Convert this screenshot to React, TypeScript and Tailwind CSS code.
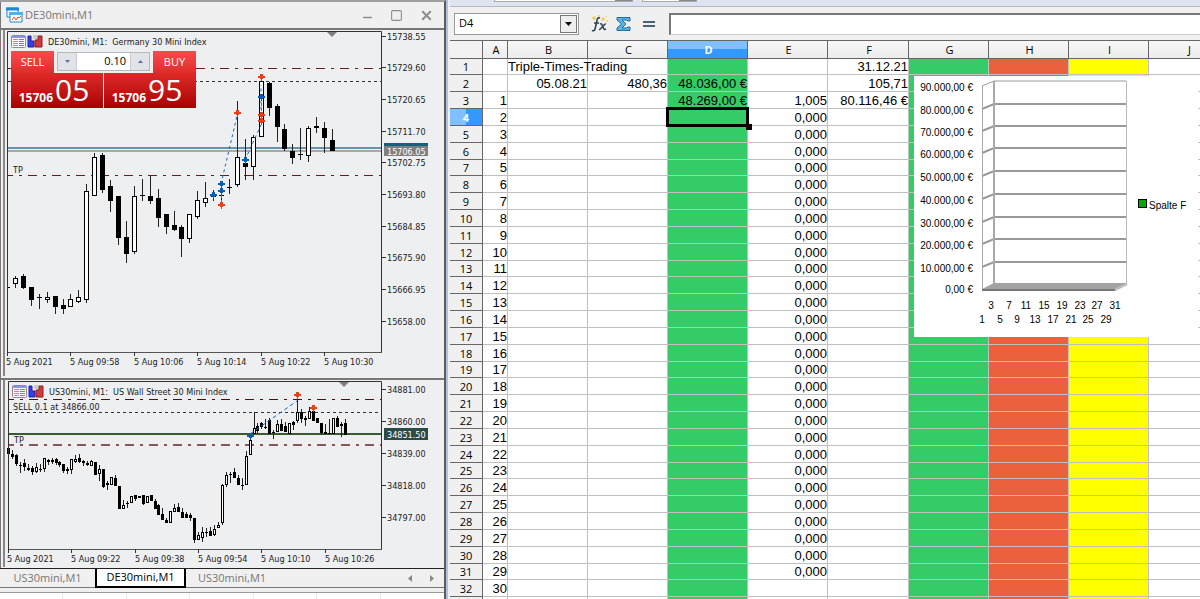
import type { ReactNode } from 'react';
import { Minus, Square, X } from 'lucide-react';

// [high, bodyTop, bodyBottom, low, 1 = bearish / 0 = bullish]
type Candle = [number, number, number, number, number];

const DE30: Candle[] = [
  [276,278,284,288,0],[274,276,288,289,1],[287,287,300,306,1],[294,297,297,309,1],[292,297,300,303,0],
  [296,296,307,314,1],[299,305,309,314,1],[294,299,307,307,0],[290,297,302,303,0],[184,191,300,303,0],
  [153,157,196,196,0],[153,155,190,193,1],[180,186,201,212,1],[196,196,238,245,1],[221,237,254,263,1],
  [186,196,252,254,0],[179,195,195,201,1],[176,196,201,204,1],[189,198,218,227,1],[214,214,227,234,1],
  [211,225,230,231,1],[225,227,239,257,1],[214,214,239,243,0],[191,200,217,219,0],[182,198,203,207,0],
  [190,196,196,201,1],[185,195,195,206,1],[179,187,187,194,1],[101,157,185,187,0],[139,163,167,180,1],
  [135,137,167,180,0],[81,81,137,137,0],[82,83,108,116,1],[104,106,127,142,1],[124,129,149,151,1],
  [144,151,158,164,1],[128,154,154,160,1],[126,128,156,162,0],[117,126,128,133,0],[122,128,138,153,1],
  [129,140,151,151,1],
];

const US30: Candle[] = [
  [447,448,454,454,1],[450,454,457,459,1],[454,455,464,466,1],[462,465,465,473,1],[459,463,467,471,1],
  [464,468,470,471,1],[466,468,472,475,1],[463,467,472,473,0],[464,469,469,472,1],[458,458,469,472,0],
  [459,460,462,465,1],[458,460,462,464,1],[458,459,463,465,1],[461,462,465,467,1],[464,464,471,473,1],
  [467,469,471,474,1],[459,459,470,474,0],[455,459,462,463,0],[454,458,462,463,1],[460,461,463,466,1],
  [461,463,465,466,1],[460,461,466,466,0],[462,462,475,475,1],[465,469,474,481,0],[469,469,487,488,1],
  [481,483,485,490,0],[477,477,485,485,0],[475,478,486,486,1],[486,486,509,509,1],[500,505,509,509,0],
  [501,503,504,508,1],[496,496,503,503,0],[495,495,499,501,1],[496,496,498,498,0],[495,495,504,505,1],
  [496,496,503,503,0],[495,495,501,501,1],[499,501,509,509,1],[504,505,515,515,1],[508,514,520,520,1],
  [518,520,523,523,1],[511,511,523,523,0],[504,508,512,512,0],[503,507,512,512,1],[508,512,518,518,1],
  [512,514,518,518,1],[513,515,518,521,1],[518,518,540,543,1],[532,535,540,540,0],[527,532,538,542,0],
  [528,532,532,537,1],[527,531,536,536,1],[525,529,535,536,0],[522,525,528,528,0],[484,485,523,525,0],
  [472,475,485,487,0],[472,474,474,483,1],[468,472,478,478,1],[475,478,485,485,1],[478,485,485,490,1],
  [451,456,485,485,0],[440,440,455,455,0],[412,428,434,434,0],[423,426,431,433,1],[422,423,427,429,1],
  [419,427,427,429,1],[418,420,434,434,1],[430,432,432,439,1],[420,424,432,432,0],[419,424,431,431,1],
  [422,426,432,432,1],[423,423,434,434,0],[421,422,425,430,1],[399,412,421,423,0],[409,412,419,423,1],
  [416,418,420,426,1],[407,411,419,419,0],[408,411,421,421,1],[418,418,423,423,1],[423,423,433,435,1],
  [424,432,434,434,0],[419,433,433,434,1],[418,418,434,434,0],[416,418,427,427,1],[422,424,426,437,0],
  [419,423,435,435,1],
];

const CHART_FONT = "font-['DejaVu_Sans_Condensed','Noto_Sans',sans-serif]";
const UI_FONT = "font-['Open_Sans','Noto_Sans',sans-serif]";

function Candles({ data, start, step, width }: { data: Candle[]; start: number; step: number; width: number }) {
  return (
    <g shapeRendering="crispEdges">
      {data.map(([high, top, bottom, low, bear], i) => {
        const x = Math.round(start + i * step);
        const left = x - Math.floor(width / 2);
        const height = Math.max(bottom - top, 1);
        return (
          <g key={i}>
            <rect x={x} y={high} width={1} height={Math.max(low - high, 1)} fill="#222" />
            <rect x={left} y={top} width={width} height={height} fill="#000" />
            {!bear && (
              <rect x={left + 1} y={top + 1} width={width - 2} height={Math.max(height - 2, 0)} fill="#fff" />
            )}
          </g>
        );
      })}
    </g>
  );
}

function Marker({ x, y, color }: { x: number; y: number; color: string }) {
  return <path d={`M${x - 3} ${y - 1}h2v-2h3v2h2v2h-2v1h-1v2h-1v-2h-1v-1h-2z`} fill={color} />;
}

const RED = '#e8401c';
const BLUE = '#0b5cb0';

type ChartProps = {
  label: string;
  title: string;
  top: number;
  height: number;
  plot: { left: number; top: number; bottom: number };
  prices: [string, number][];
  times: [string, number][];
  shift: number;
  children: ReactNode;
};

function Chart({ label, title, top, height, plot, prices, times, shift, children }: ChartProps) {
  const { left, bottom } = plot;
  return (
    <svg
      role="img"
      aria-label={label}
      width={434}
      height={height}
      viewBox={`5 ${top} 434 ${height}`}
      className={`block ${CHART_FONT} text-[9px]`}
      fill="#222"
    >
      {children}
      <path d={`M${left + 0.5} ${bottom}V${plot.top + 0.5}H381.5V${bottom}`} fill="none" stroke="#333" />
      <path d={`M${left} ${bottom}.5H382`} stroke="#555" />
      <path d={`M${shift - 5} ${plot.top + 1}h10l-5 5z`} fill="#808080" />
      {prices.map(([text, y]) => (
        <g key={text}>
          <path d={`M382 ${y}.5h4`} stroke="#333" />
          <text x={387} y={y + 4}>{text}</text>
        </g>
      ))}
      {times.map(([text, x], i) => (
        <g key={text}>
          <path d={`M${x}.5 ${bottom}v4`} stroke="#333" />
          <text x={i ? x : x - 1} y={bottom + 13}>{text}</text>
        </g>
      ))}
      <g transform={`translate(${left + 4} ${plot.top + 4})`}>
        <rect x=".5" y=".5" width="14" height="12" rx="1" fill="#fff" stroke="#8a8aa5" />
        <path d="M1 2h13" stroke="#8d95e0" strokeWidth="2" />
        <path d="M2 4.500h5M2 6.500h5M2 8.500h5M2 10.500h5" stroke="#e87878" />
        <path d="M8 4.500h5M8 6.500h5M8 8.500h5M8 10.500h5" stroke="#6f7be0" />
        <path d="M17 1h3v5h3v6h-6z" fill="#3b3fe0" stroke="#20209a" />
        <path d="M31 1h-4v4h-3v7h7z" fill="#cf3a3a" stroke="#8a2020" />
        <path d="M22 1h5M22 3h4" stroke="#aaa" />
      </g>
      <text x={left + 41} y={plot.top + 14} xmlSpace="preserve">{title}</text>
    </svg>
  );
}

const dashDot = { strokeDasharray: '9 6 3 6', strokeDashoffset: 4 };

function DE30Chart() {
  return (
    <Chart
      label="DE30mini M1 candlestick chart"
      title="DE30mini, M1:  Germany 30 Mini Index"
      top={30}
      height={343}
      plot={{ left: 7, top: 31, bottom: 352 }}
      shift={332}
      prices={[
        ['15738.55', 36], ['15729.60', 67], ['15720.65', 99], ['15711.70', 131], ['15702.75', 162],
        ['15693.80', 194], ['15684.85', 226], ['15675.90', 257], ['15666.95', 289], ['15658.00', 321],
      ]}
      times={[
        ['5 Aug 2021', 7], ['5 Aug 09:58', 70], ['5 Aug 10:06', 134],
        ['5 Aug 10:14', 197], ['5 Aug 10:22', 261], ['5 Aug 10:30', 324],
      ]}
    >
      <path d="M8 68.500H381M8 175.500H381" stroke="#641c1c" {...dashDot} />
      <path d="M8 81.500H381" stroke="#333" strokeDasharray="3 3" />
      <path d="M8 148H381" stroke="#6595aa" strokeWidth="2" />
      <path d="M8 151H381" stroke="#a5a9a9" strokeWidth="2" />
      <text x="13" y="173">TP</text>
      <path d="M8 287.500h2" stroke="#000" />
      <Candles data={DE30} start={15} step={7.925} width={5} />
      <path d="M221 184L237 116M245 160L261 125V85" fill="none" stroke="#1769c0" strokeDasharray="3 3" />
      <path d="M261.500 98V122M221.500 190V203" stroke={RED} strokeDasharray="3 2" />
      {[[237, 113], [261, 77], [261, 115], [261, 121], [221, 205]].map(([x, y]) => (
        <Marker key={`${x}-${y}`} x={x} y={y} color={RED} />
      ))}
      {[[261, 97], [245, 160], [221, 184], [221, 191], [213, 195]].map(([x, y]) => (
        <Marker key={`${x}-${y}`} x={x} y={y} color={BLUE} />
      ))}
      <rect x="384" y="143" width="44" height="3" fill="#17607c" />
      <rect x="384" y="146" width="44" height="10" fill="#808080" />
      <text x="387" y="155" fill="#fff">15706.05</text>
    </Chart>
  );
}

function US30Chart() {
  return (
    <Chart
      label="US30mini M1 candlestick chart"
      title="US30mini, M1:  US Wall Street 30 Mini Index"
      top={380}
      height={186}
      plot={{ left: 8, top: 381, bottom: 549 }}
      shift={344}
      prices={[['34881.00', 389], ['34860.00', 421], ['34839.00', 453], ['34818.00', 485], ['34797.00', 517]]}
      times={[
        ['5 Aug 2021', 8], ['5 Aug 09:22', 71], ['5 Aug 09:38', 135],
        ['5 Aug 09:54', 198], ['5 Aug 10:10', 261], ['5 Aug 10:26', 325],
      ]}
    >
      <path d="M9 399.500H381" stroke="#4a1010" {...dashDot} />
      <path d="M9 412.500H381" stroke="#333" strokeDasharray="3 3" />
      <path d="M9 434H381" stroke="#3c5a30" strokeWidth="2" />
      <path d="M9 445H381" stroke="#8c5656" strokeWidth="2" {...dashDot} />
      <text x="13" y="410">SELL 0.1 at 34866.00</text>
      <text x="14" y="443">TP</text>
      <Candles data={US30} start={8} step={3.96} width={3} />
      <path d="M250 434L297 401" stroke="#1769c0" strokeDasharray="4 3" />
      <Marker x={250} y={436} color={BLUE} />
      <Marker x={297} y={395} color={RED} />
      <Marker x={313} y={408} color={RED} />
      <rect x="384" y="428" width="44" height="12" fill="#2b4a48" />
      <text x="387" y="438" fill="#fff">34851.50</text>
    </Chart>
  );
}

function TradeButton({ side, price, pips }: { side: 'SELL' | 'BUY'; price: string; pips: string }) {
  return (
    <button className="flex h-[57px] w-[92px] flex-col text-white">
      <span
        className={`flex h-[22px] w-[43px] items-center justify-center bg-linear-to-b from-[#f94b4b] to-[#df2c2c] text-[11px] ${
          side === 'BUY' ? 'self-end' : ''
        }`}
      >
        {side}
      </span>
      <span className="flex w-full flex-1 items-end justify-center gap-0.5 bg-linear-to-b from-[#df2828] to-[#a80000] pr-1.5 leading-none">
        <span className="pb-1 text-xs leading-3 font-bold">{price}</span>
        <span className="pb-0.5 text-[30px] leading-8">{pips}</span>
      </span>
    </button>
  );
}

function OneClickPanel() {
  return (
    <div className={`absolute top-[21px] left-[6px] flex gap-px ${UI_FONT}`}>
      <TradeButton side="SELL" price="15706" pips="05" />
      <TradeButton side="BUY" price="15706" pips="95" />
      <div className="absolute top-0 left-[43px] flex h-[22px] w-[99px] bg-[#eeeff1] px-[3px] pt-px pb-0.5">
        <div className="flex w-full border border-[#b4b8c0] bg-white">
          <button aria-label="Decrease volume" className="flex w-[18px] shrink-0 items-center justify-center bg-[#e2e3e6]">
            <svg width="5" height="3"><path d="M0 0h5L2.500 3z" fill="#5c6fa8" /></svg>
          </button>
          <input aria-label="Volume" defaultValue="0.10" className="w-0 flex-1 border-x border-[#c8ccd2] pr-1 text-right text-[11px] text-black" />
          <button aria-label="Increase volume" className="flex w-[18px] shrink-0 items-center justify-center bg-[#e2e3e6]">
            <svg width="5" height="3"><path d="M0 3h5L2.500 0z" fill="#5c6fa8" /></svg>
          </button>
        </div>
      </div>
    </div>
  );
}

function TerminalPanel() {
  return (
    <section className={`flex w-[446px] shrink-0 flex-col overflow-hidden border-t-2 border-r-2 border-t-[#a0a0a0] border-r-[#605a5a] bg-[#f0f0f0] ${UI_FONT}`}>
      <header className="flex h-[26px] shrink-0 items-center border-l border-[#777] pr-2.5 pl-[5px] text-[11px] text-[#777]">
        <svg width="17" height="17" viewBox="0 0 17 17" className="mr-0.5">
          <path d="M1 1h11v9H1z" fill="#fff" stroke="#1c86d8" />
          <path d="M0 2h13" stroke="#1c86d8" strokeWidth="3" />
          <path d="M4 6h12v9H4z" fill="#fff" stroke="#1c86d8" />
          <path d="M3 6.500h14" stroke="#49b4f4" strokeWidth="3" />
          <path d="M6 13l2-3 2 3 2-3 1 1 2-2" fill="none" stroke="#e8502c" />
        </svg>
        <span className="flex-1">DE30mini,M1</span>
        <div className="flex gap-4 text-[#8c8c8c]">
          <button aria-label="Minimize" className="pt-1"><Minus size={13} strokeWidth={3} /></button>
          <button aria-label="Maximize"><Square size={13} /></button>
          <button aria-label="Close"><X size={15} strokeWidth={3} /></button>
        </div>
      </header>

      <div className="h-[350px] shrink-0 border-t-2 border-l border-[#777] pr-1 pl-0.5">
        <div className="relative h-[346px] border-l-2 border-[#8a8686] bg-[#eeeff1]">
          <OneClickPanel />
          <DE30Chart />
        </div>
      </div>

      <div className="h-[190px] shrink-0 border-t-2 border-l border-[#777] pr-1 pl-0.5">
        <div className="h-[187px] border-l-2 border-[#8a8686] bg-[#eeeff1]">
          <US30Chart />
        </div>
      </div>

      <nav className="flex h-[25px] shrink-0 items-start border-t border-b border-t-[#222] border-b-[#999] text-[11px] text-[#777]">
        <button className="h-[19px] w-[95px] border-b border-[#777]">US30mini,M1</button>
        <button className="h-[19px] w-[91px] border-x-2 border-b-2 border-black bg-white text-black">DE30mini,M1</button>
        <button className="h-[19px] w-[92px] border-b border-[#777]">US30mini,M1</button>
        <div className="flex h-[19px] flex-1 items-center justify-end gap-[18px] border-b border-[#777] pr-2.5">
          <button aria-label="Scroll left"><svg width="4" height="7"><path d="M4 0v7L0 3.500z" fill="#888" /></svg></button>
          <button aria-label="Scroll right"><svg width="4" height="7"><path d="M0 0v7l4-3.500z" fill="#888" /></svg></button>
        </div>
      </nav>
      <div className="grid flex-1 grid-cols-7 divide-x divide-[#e8e8e8] bg-white">
        {Array.from({ length: 7 }, (_, i) => <div key={i} />)}
      </div>
    </section>
  );
}

const COLUMNS = ['A', 'B', 'C', 'D', 'E', 'F', 'G', 'H', 'I', 'J'] as const;

const ROW_COUNT = 32;

const FILL: Record<string, string> = {
  D: 'bg-[#33cc66]',
  G: 'bg-[#33cc66]',
  H: 'bg-[#eb613d]',
  I: 'bg-[#ffff00]',
};

const CELLS: Record<string, string> = {
  B1: 'Triple-Times-Trading',
  F1: '31.12.21',
  B2: '05.08.21',
  C2: '480,36',
  D2: '48.036,00 €',
  F2: '105,71',
  D3: '48.269,00 €',
  E3: '1,005',
  F3: '80.116,46 €',
};

function cellText(col: string, row: number) {
  if (col === 'A' && row > 2) return String(row - 2);
  if (col === 'E' && row > 3 && row < 32) return '0,000';
  return CELLS[col + row] ?? '';
}

function Sheet() {
  return (
    <table className="w-[739px] table-fixed border-separate border-spacing-0 font-['Liberation_Sans',Arial,sans-serif] text-[13px] text-black">
      <colgroup>
        <col className="w-[33px]" />
        <col className="w-[25px]" />
        {COLUMNS.slice(1).map((c) => <col key={c} className={c === 'F' ? 'w-[81px]' : 'w-20'} />)}
      </colgroup>
      <thead>
        <tr className={`h-[18px] text-[11px] leading-4 ${UI_FONT}`}>
          <th aria-label="Select all" className="border-r border-b border-[#666] bg-[#f2f2f2] p-0" />
          {COLUMNS.map((c) => (
            <th
              key={c}
              scope="col"
              className={`border-r border-b border-[#666] p-0 pl-0.5 ${
                c === 'D'
                  ? 'bg-linear-to-b from-[#80c0ff] from-50% to-[#3399ff] to-50% font-bold text-white'
                  : 'bg-linear-to-b from-[#f8f8f8] to-[#ececec] font-normal'
              }`}
            >
              {c}
            </th>
          ))}
        </tr>
      </thead>
      <tbody>
        {Array.from({ length: ROW_COUNT }, (_, i) => i + 1).map((row) => (
          <tr key={row} className={row % 6 === 1 ? 'h-4' : 'h-[17px]'}>
            <th
              scope="row"
              className={`border-r border-b border-[#666] p-0 pt-px text-[11px] leading-[14px] ${UI_FONT} ${
                row === 4
                  ? 'bg-linear-to-r from-[#80c0ff] from-50% to-[#3399ff] to-50% font-bold text-white'
                  : 'bg-[#f0f0f0] font-normal'
              }`}
            >
              {row}
            </th>
            {COLUMNS.map((c) => (
              <td
                key={c}
                className={`border-r border-b border-[#c0c0c0] p-0 pt-px leading-[14px] whitespace-nowrap ${FILL[c] ?? 'bg-white'} ${
                  c + row === 'B1' ? 'text-left' : 'text-right'
                } ${c + row === 'D4' ? 'relative' : ''}`}
              >
                {cellText(c, row)}
                {c + row === 'D4' && (
                  <span className="absolute -inset-0.5 border-[3px] border-black">
                    <span className="absolute -right-1.5 -bottom-1.5 size-[6px] bg-black" />
                  </span>
                )}
              </td>
            ))}
          </tr>
        ))}
        <tr aria-hidden="true" className="h-[17px]">
          <th className="border-r border-[#666] bg-[#f0f0f0] p-0" />
          {COLUMNS.map((c) => <td key={c} className={`border-r border-[#c0c0c0] p-0 ${FILL[c] ?? 'bg-white'}`} />)}
        </tr>
      </tbody>
    </table>
  );
}

// y of each back-wall grid line, 90.000 down to 10.000
const LEVELS = [5, 28, 50, 72, 95, 118, 141, 163, 186];

function ColumnChart() {
  return (
    <figure className="absolute top-[35px] left-[464px] h-[261px] w-[284px] bg-white">
      <svg
        role="img"
        aria-label="Spalte F"
        width="284"
        height="261"
        className="block font-['Liberation_Sans',Arial,sans-serif] text-[10px]"
      >
        {LEVELS.map((y, i) => (
          <g key={y}>
            <path d={`M68 ${y + 5}L80 ${y}H212`} fill="none" stroke="#999" strokeWidth={i ? 2 : 1} />
            <text x="59" y={y + 10} textAnchor="end">{`${90 - i * 10}.000,00 €`}</text>
          </g>
        ))}
        <path d="M68.500 10V214" stroke="#aaa" />
        <path d="M80 5V208" stroke="#aaa" strokeWidth="2" />
        <path d="M212.500 5V208" stroke="#bbb" />
        <path d="M68 213L80 207H213L201 213z" fill="#a3a3a3" />
        <path d="M68 214H201" stroke="#777" strokeWidth="2" />
        <path d="M201 214L213 208" stroke="#bbb" strokeWidth="2" />
        <text x="59" y="217" textAnchor="end">0,00 €</text>
        <g textAnchor="middle">
          {Array.from({ length: 8 }, (_, i) => (
            <text key={i} x={77 + Math.round(i * 17.7)} y="233">{3 + i * 4}</text>
          ))}
          {Array.from({ length: 8 }, (_, i) => (
            <text key={i} x={68 + Math.round(i * 17.7)} y="247">{1 + i * 4}</text>
          ))}
        </g>
        <rect x="224.500" y="123.500" width="8" height="8" fill="#00aa00" stroke="#000" />
        <text x="235" y="133">Spalte F</text>
      </svg>
    </figure>
  );
}

function ToolbarBox({ className }: { className: string }) {
  return (
    <div className={`flex h-0.5 justify-end border border-t-0 border-[#a8a8b0] bg-white ${className}`}>
      <div className="h-px w-[17px] bg-[#888]" />
    </div>
  );
}

function CalcPanel() {
  return (
    <section className={`flex min-w-0 flex-1 flex-col overflow-hidden border-l-2 border-[#adc3de] bg-[#f0f0f0] pl-0.5 ${UI_FONT}`}>
      <div className="flex h-[7px] shrink-0 items-start gap-[9px] border-b border-[#b8b8b8] bg-[#dfe4f2] pl-11">
        <ToolbarBox className="w-[139px]" />
        <ToolbarBox className="w-[55px]" />
      </div>
      <div className="flex h-[33px] shrink-0 items-center pl-1">
        <div className="flex h-[22px] w-[125px] border border-[#999] bg-white">
          <input aria-label="Name Box" defaultValue="D4" className="w-0 flex-1 pl-1 text-[11px] text-black" />
          <button aria-label="Select range" className="m-px flex w-[17px] items-center justify-center border border-[#777] bg-[#eee]">
            <svg width="7" height="4"><path d="M0 0h7L3.500 4z" fill="#000" /></svg>
          </button>
        </div>
        <button aria-label="Function Wizard" className="ml-3">
          <svg width="17" height="18" viewBox="0 0 17 18" fill="none">
            <path d="M9 3C6 2 6 5 5.500 8L4 14c-.5 2-2 2-3 1.500M3 8h5" stroke="#2b4457" strokeWidth="1.600" />
            <path d="M9 9c2-1 2 1 3 3s1 3 3 2M15 9c-2-1-5 6-7 5.500" stroke="#2b4457" strokeWidth="1.500" />
            <path d="M3 1v4M1 3h4M8 0v2M12 2v4M10 4h4M15 6h2M15 1v1" stroke="#f0c420" />
          </svg>
        </button>
        <button aria-label="Sum" className="ml-2">
          <svg width="15" height="16" viewBox="0 0 15 16">
            <path d="M1 1.500h13v3.500h-2l-1-1H6l4 4-4 4h5l1-1h2v3.500H1V12l4.500-4L1 4z" fill="#5db4e0" stroke="#1d6a9c" />
          </svg>
        </button>
        <button aria-label="Function" className="ml-3">
          <svg width="12" height="6"><path d="M0 1h12M0 5h12" stroke="#4a6274" strokeWidth="2" /></svg>
        </button>
        <input aria-label="Input line" className="ml-3.5 h-[22px] min-w-0 flex-1 border-t-2 border-b border-l-2 border-t-[#777] border-b-[#ccc] border-l-[#777] bg-white px-1 text-[11px]" />
      </div>
      <div className="relative min-h-0 flex-1 overflow-hidden border-t border-[#666]">
        <Sheet />
        <ColumnChart />
      </div>
    </section>
  );
}

export default function App() {
  return (
    <main className="flex h-screen overflow-hidden bg-white">
      <TerminalPanel />
      <CalcPanel />
    </main>
  );
}
